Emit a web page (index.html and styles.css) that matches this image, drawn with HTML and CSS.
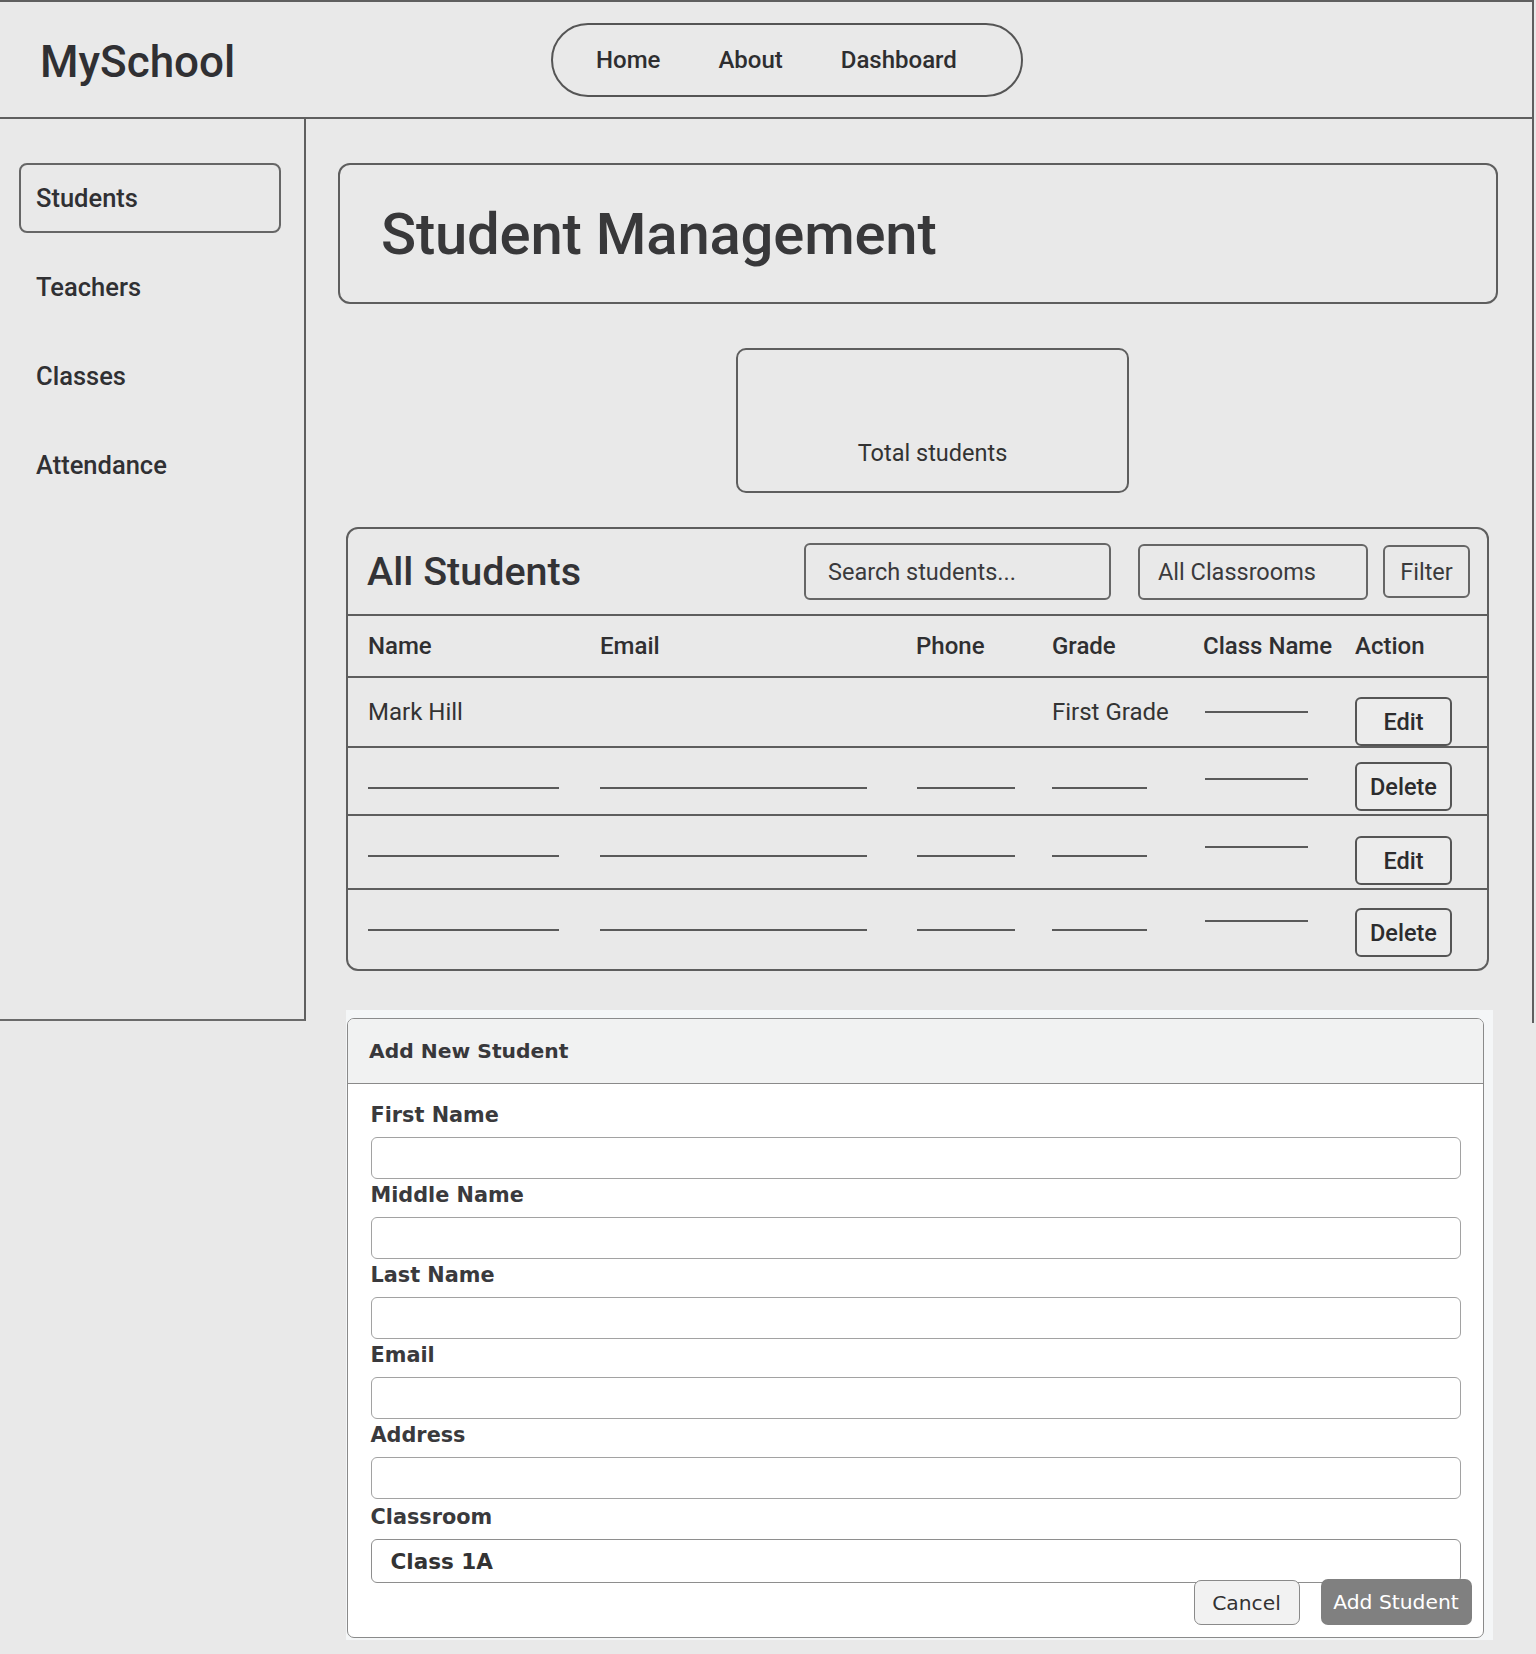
FILE: index.html
```html
<!DOCTYPE html>
<html lang="en">
<head>
<meta charset="utf-8">
<title>MySchool – Student Management</title>
<link rel="stylesheet" href="styles.css">
</head>
<body>
<div class="app">
  <header class="topbar">
    <div class="logo">MySchool</div>
    <nav class="topnav">
      <a class="topnav-link">Home</a>
      <a class="topnav-link">About</a>
      <a class="topnav-link">Dashboard</a>
    </nav>
  </header>
  <div class="layout">
    <aside class="sidebar">
      <a class="side-link active">Students</a>
      <a class="side-link">Teachers</a>
      <a class="side-link">Classes</a>
      <a class="side-link">Attendance</a>
    </aside>
    <main class="content">
      <section class="title-card">
        <h1 class="page-title">Student Management</h1>
      </section>

      <div class="stat-card">
        <span class="stat-label">Total students</span>
      </div>

      <section class="table-card">
        <div class="table-head">
          <h2 class="table-title">All Students</h2>
          <div class="search">Search students...</div>
          <div class="classroom-filter">All Classrooms</div>
          <button class="filter-btn">Filter</button>
        </div>

        <div class="trow thead">
          <div class="cell">Name</div>
          <div class="cell">Email</div>
          <div class="cell">Phone</div>
          <div class="cell">Grade</div>
          <div class="cell">Class Name</div>
          <div class="cell">Action</div>
        </div>

        <div class="trow">
          <div class="cell">Mark Hill</div>
          <div class="cell"></div>
          <div class="cell"></div>
          <div class="cell">First Grade</div>
          <div class="cell"><span class="ph ph-class"></span></div>
          <div class="cell cell-action"><button class="row-btn">Edit</button></div>
        </div>

        <div class="trow short">
          <div class="cell cell-ph"><span class="ph ph-name"></span></div>
          <div class="cell cell-ph"><span class="ph ph-email"></span></div>
          <div class="cell cell-ph"><span class="ph ph-phone"></span></div>
          <div class="cell cell-ph"><span class="ph ph-grade"></span></div>
          <div class="cell cell-ph-high"><span class="ph ph-class"></span></div>
          <div class="cell cell-action lifted"><button class="row-btn">Delete</button></div>
        </div>

        <div class="trow tall">
          <div class="cell cell-ph"><span class="ph ph-name"></span></div>
          <div class="cell cell-ph"><span class="ph ph-email"></span></div>
          <div class="cell cell-ph"><span class="ph ph-phone"></span></div>
          <div class="cell cell-ph"><span class="ph ph-grade"></span></div>
          <div class="cell cell-ph-high"><span class="ph ph-class"></span></div>
          <div class="cell cell-action lifted"><button class="row-btn">Edit</button></div>
        </div>

        <div class="trow last">
          <div class="cell cell-ph"><span class="ph ph-name"></span></div>
          <div class="cell cell-ph"><span class="ph ph-email"></span></div>
          <div class="cell cell-ph"><span class="ph ph-phone"></span></div>
          <div class="cell cell-ph"><span class="ph ph-grade"></span></div>
          <div class="cell cell-ph-high"><span class="ph ph-class"></span></div>
          <div class="cell cell-action lifted"><button class="row-btn">Delete</button></div>
        </div>
      </section>

      <section class="form-wrap">
        <div class="form-card">
          <div class="form-header">Add New Student</div>
          <div class="form-body">
            <label class="field-label">First Name</label>
            <div class="field-input"></div>
            <label class="field-label">Middle Name</label>
            <div class="field-input"></div>
            <label class="field-label">Last Name</label>
            <div class="field-input"></div>
            <label class="field-label">Email</label>
            <div class="field-input"></div>
            <label class="field-label">Address</label>
            <div class="field-input"></div>
            <label class="field-label field-label-spaced">Classroom</label>
            <div class="field-select">Class 1A</div>
            <div class="form-actions">
              <button class="btn-cancel">Cancel</button>
              <button class="btn-add">Add Student</button>
            </div>
          </div>
        </div>
      </section>
    </main>
  </div>
</div>
</body>
</html>
```

FILE: styles.css
```css
* { box-sizing: border-box; }

html, body {
  margin: 0;
  padding: 0;
  background: #e9e9e9;
}

body {
  font-family: Roboto, "Liberation Sans", sans-serif;
  color: #303033;
}

button {
  font-family: inherit;
  cursor: pointer;
}

/* frame: top line + right line that stops under the sidebar's bottom */
.app {
  width: 1534px;
  min-height: 1654px;
  padding-right: 2px;
  border-top: 2px solid #5f5f5f;
  background: linear-gradient(#5f5f5f, #5f5f5f) right top / 2px 1021px no-repeat;
}

/* ---------- top bar ---------- */
.topbar {
  height: 117px;
  border-bottom: 2px solid #5f5f5f;
  display: flex;
  align-items: center;
  padding-left: 40px;
}

.logo {
  flex: 0 0 511px;
  font-size: 44px;
  font-weight: 500;
  color: #303033;
  padding-top: 4px;
}

.topnav {
  height: 74px;
  border: 2px solid #555;
  border-radius: 38px;
  display: flex;
  align-items: center;
  gap: 58px;
  padding: 0 64px 0 43px;
}

.topnav-link {
  font-size: 24px;
  font-weight: 500;
  color: #2e2e30;
}

/* ---------- layout ---------- */
.layout {
  display: flex;
  align-items: flex-start;
}

.sidebar {
  flex: 0 0 306px;
  height: 902px;
  border-right: 2px solid #5f5f5f;
  border-bottom: 2px solid #6a6a6a;
  padding: 44px 23px 0 19px;
  display: flex;
  flex-direction: column;
  gap: 19px;
}

.side-link {
  height: 70px;
  display: flex;
  align-items: center;
  padding-left: 15px;
  font-size: 25.5px;
  font-weight: 500;
  color: #303033;
  border: 2px solid transparent;
  border-radius: 8px;
}

.side-link.active {
  border-color: #666;
}

.content {
  flex: 1;
  padding: 44px 34px 20px 32px;
}

/* ---------- title card ---------- */
.title-card {
  height: 141px;
  border: 2px solid #5e5e5e;
  border-radius: 12px;
  display: flex;
  align-items: center;
  padding-left: 41px;
}

.page-title {
  margin: 0;
  font-size: 58px;
  font-weight: 500;
  color: #38383a;
  letter-spacing: -0.2px;
}

/* ---------- stat card ---------- */
.stat-card {
  margin-top: 44px;
  margin-left: 398px;
  width: 393px;
  height: 145px;
  border: 2px solid #5e5e5e;
  border-radius: 10px;
  display: flex;
  flex-direction: column;
  justify-content: flex-end;
  align-items: center;
  padding-bottom: 24px;
}

.stat-label {
  font-size: 23.5px;
  line-height: 28px;
  color: #333;
}

/* ---------- table card ---------- */
.table-card {
  margin: 34px 9px 0 8px;
  border: 2px solid #5e5e5e;
  border-radius: 12px;
  padding-bottom: 9px;
}

.table-head {
  height: 87px;
  border-bottom: 2px solid #5e5e5e;
  display: flex;
  align-items: center;
  padding: 0 17px 0 19px;
}

.table-title {
  flex: 1;
  margin: 0;
  font-size: 39.5px;
  font-weight: 500;
  color: #333336;
}

.search,
.classroom-filter,
.filter-btn {
  border: 2px solid #666;
  border-radius: 6px;
  font-size: 23.5px;
  color: #3a3a3c;
  display: flex;
  align-items: center;
  background: transparent;
}

.search {
  width: 307px;
  height: 57px;
  padding-left: 22px;
  margin-right: 27px;
}

.classroom-filter {
  width: 230px;
  height: 56px;
  padding-left: 18px;
  margin-right: 15px;
}

.filter-btn {
  width: 87px;
  height: 53px;
  justify-content: center;
  padding: 0;
  font-family: Roboto, "Liberation Sans", sans-serif;
}

.trow {
  display: grid;
  grid-template-columns: 232px 316px 136px 151px 152px 1fr;
  height: 70px;
  padding-left: 20px;
  border-bottom: 2px solid #5e5e5e;
  align-items: center;
  font-size: 24px;
  color: #333;
}

.trow.thead {
  height: 62px;
  font-weight: 500;
  color: #2f2f31;
}

.trow.short { height: 68px; }
.trow.tall { height: 74px; }

.trow.last {
  border-bottom: none;
  height: 70px;
}

.cell {
  line-height: 28px;
}

.cell-ph {
  align-self: start;
  padding-top: 39px;
  line-height: 0;
}

.cell-ph-high {
  align-self: start;
  padding-top: 30px;
  line-height: 0;
}

.cell-action {
  align-self: end;
  line-height: 0;
}

.cell-action.lifted {
  margin-bottom: 3px;
}

.ph {
  display: block;
  height: 2px;
  background: #5a5a5a;
}

.ph-name { width: 191px; }
.ph-email { width: 267px; }
.ph-phone { width: 98px; margin-left: 1px; }
.ph-grade { width: 95px; }
.ph-class { width: 103px; margin-left: 2px; }

.row-btn {
  width: 97px;
  height: 49px;
  border: 2px solid #555;
  border-radius: 6px;
  background: #ececec;
  font-size: 23.5px;
  font-weight: 500;
  color: #2c2c2e;
  padding: 0;
}

/* ---------- add student form ---------- */
.form-wrap {
  margin: 39px 5px 0 8px;
  background: #f4f6f7;
  padding: 8px 9px 2px 1px;
}

.form-card {
  background: #fff;
  border: 1.5px solid #8a8a8a;
  border-radius: 7px;
  overflow: hidden;
}

.form-header {
  height: 65px;
  background: #f1f2f2;
  border-bottom: 1.5px solid #8a8a8a;
  display: flex;
  align-items: center;
  padding-left: 21px;
  font-family: "DejaVu Sans", sans-serif;
  font-weight: bold;
  font-size: 20.3px;
  color: #38383b;
}

.form-body {
  padding: 19px 22.5px 11.5px 22.5px;
  display: flex;
  flex-direction: column;
}

.field-label {
  display: block;
  font-family: "DejaVu Sans", sans-serif;
  font-weight: bold;
  font-size: 20.8px;
  line-height: 24px;
  color: #3a3a3d;
  margin-bottom: 10px;
}

.field-label-spaced {
  margin-top: 2px;
}

.field-input {
  height: 42px;
  border: 1.5px solid #a2a2a2;
  border-radius: 6px;
  margin-bottom: 4px;
  background: #fff;
}

.field-select {
  height: 44px;
  border: 1.5px solid #8e8e8e;
  border-radius: 6px;
  display: flex;
  align-items: center;
  padding-left: 19px;
  font-family: "DejaVu Sans", sans-serif;
  font-weight: bold;
  font-size: 21.5px;
  color: #333;
}

.form-actions {
  margin-top: -4px;
  margin-right: -11px;
  display: flex;
  justify-content: flex-end;
  gap: 21px;
}

.btn-cancel,
.btn-add {
  font-family: "DejaVu Sans", sans-serif;
  font-size: 20.3px;
  border-radius: 7px;
  padding: 0;
}

.btn-cancel {
  width: 106px;
  height: 45px;
  margin-top: 1px;
  background: #f2f2f2;
  border: 1.5px solid #8a8a8a;
  color: #333;
}

.btn-add {
  width: 151px;
  height: 46px;
  background: #808080;
  border: none;
  color: #fff;
}
```
